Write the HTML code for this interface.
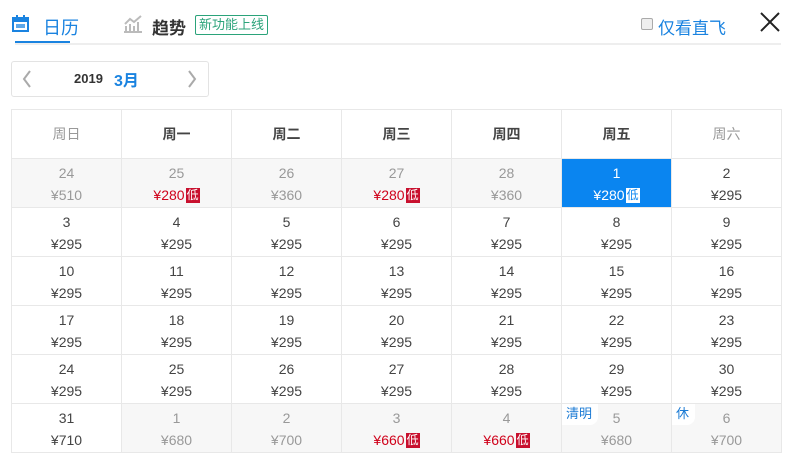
<!DOCTYPE html>
<html><head><meta charset="utf-8"><style>
body{margin:0;width:800px;height:453px;background:#fff;font-family:"Liberation Sans","Noto Sans CJK SC",sans-serif;position:relative;overflow:hidden;color:#333}
.a{position:absolute}
.grid{position:absolute;left:11px;top:109px;width:770px;height:343px;padding:1px 0 0 1px;background:#e8e8e8;display:grid;grid-template-columns:repeat(7,109px);grid-auto-rows:48px;gap:1px}
.grid>div{background:#fff;text-align:center;font-size:14px;color:#444;position:relative}
.th{font-size:15px;font-weight:bold;color:#333;line-height:48px}
.grid>div.w{color:#999;font-weight:normal}
.n{display:block;margin-top:6px;line-height:16px}
.p{display:block;margin-top:6px;line-height:16px}
.grid>div.g{background:#f7f7f7;color:#999}
.grid>div.s{background:#0a85f0;color:#fff}
.r{color:#d0021b}
.d{display:inline-block;background:#c8102e;color:#fff;font-size:12px;line-height:15px;padding:0 1px;margin-left:1px;vertical-align:1px}
.s .d{background:#fff;color:#0a85f0}
.h{position:absolute;left:0;top:0;background:#fff;color:#1a7ad4;font-size:13px;padding:1px 6px 2px 4px;border-radius:0 0 8px 0;line-height:18px}
</style></head><body>
<svg class="a" style="left:12px;top:15px" width="17" height="17" viewBox="0 0 17 17"><rect x="1" y="3" width="15" height="13" fill="none" stroke="#1a83e0" stroke-width="2"/><rect x="1" y="3" width="15" height="4" fill="#1a83e0"/><rect x="4" y="0" width="2" height="4" fill="#1a83e0"/><rect x="11" y="0" width="2" height="4" fill="#1a83e0"/><rect x="4" y="9" width="9" height="4" fill="#1a83e0" opacity=".7"/></svg>
<div class="a" style="left:43px;top:14px;font-size:18px;color:#1a83e0">日历</div>
<div class="a" style="left:15px;top:41px;width:55px;height:2px;background:#1a83e0"></div>
<div class="a" style="left:15px;top:43px;width:766px;height:2px;background:#eee"></div>
<svg class="a" style="left:123px;top:15px" width="20" height="18" viewBox="0 0 20 18"><path d="M1 17h18M3 16v-5M7 16v-7M11 16v-5M15 16v-9M2 9l5-5 4 3 7-6" fill="none" stroke="#bbb" stroke-width="2"/></svg>
<div class="a" style="left:152px;top:14px;font-size:17px;color:#333;font-weight:bold">趋势</div>
<div class="a" style="left:195px;top:15px;width:71px;height:18px;border:1px solid #2ba37a;border-radius:2px;color:#2ba37a;font-size:13px;line-height:18px;text-align:center">新功能上线</div>
<div class="a" style="left:641px;top:18px;width:10px;height:10px;border:1px solid #aaa;background:#eee;border-radius:2px"></div>
<div class="a" style="left:658px;top:14px;font-size:17px;color:#1a83e0">仅看直飞</div>
<svg class="a" style="left:760px;top:12px" width="20" height="20" viewBox="0 0 20 20"><path d="M1 1L19 19M19 1L1 19" stroke="#222" stroke-width="2"/></svg>
<div class="a" style="left:11px;top:61px;width:196px;height:34px;border:1px solid #e3e3e3;border-radius:3px"></div>
<svg class="a" style="left:22px;top:70px" width="10" height="18"><path d="M8 1L2 9l6 8" fill="none" stroke="#aaa" stroke-width="2"/></svg>
<svg class="a" style="left:187px;top:70px" width="10" height="18"><path d="M2 1l6 8-6 8" fill="none" stroke="#aaa" stroke-width="2"/></svg>
<div class="a" style="left:74px;top:71px;font-size:13px;font-weight:bold;color:#333">2019</div>
<div class="a" style="left:114px;top:67px;font-size:16px;font-weight:bold;color:#1a83e0">3月</div>
<div class="grid">
<div class="th w">周日</div><div class="th">周一</div><div class="th">周二</div><div class="th">周三</div><div class="th">周四</div><div class="th">周五</div><div class="th w">周六</div>
<div class="g"><span class="n">24</span><span class="p">¥510</span></div><div class="g"><span class="n">25</span><span class="p r">¥280<span class="d">低</span></span></div><div class="g"><span class="n">26</span><span class="p">¥360</span></div><div class="g"><span class="n">27</span><span class="p r">¥280<span class="d">低</span></span></div><div class="g"><span class="n">28</span><span class="p">¥360</span></div><div class="s"><span class="n">1</span><span class="p">¥280<span class="d">低</span></span></div><div><span class="n">2</span><span class="p">¥295</span></div>
<div><span class="n">3</span><span class="p">¥295</span></div><div><span class="n">4</span><span class="p">¥295</span></div><div><span class="n">5</span><span class="p">¥295</span></div><div><span class="n">6</span><span class="p">¥295</span></div><div><span class="n">7</span><span class="p">¥295</span></div><div><span class="n">8</span><span class="p">¥295</span></div><div><span class="n">9</span><span class="p">¥295</span></div>
<div><span class="n">10</span><span class="p">¥295</span></div><div><span class="n">11</span><span class="p">¥295</span></div><div><span class="n">12</span><span class="p">¥295</span></div><div><span class="n">13</span><span class="p">¥295</span></div><div><span class="n">14</span><span class="p">¥295</span></div><div><span class="n">15</span><span class="p">¥295</span></div><div><span class="n">16</span><span class="p">¥295</span></div>
<div><span class="n">17</span><span class="p">¥295</span></div><div><span class="n">18</span><span class="p">¥295</span></div><div><span class="n">19</span><span class="p">¥295</span></div><div><span class="n">20</span><span class="p">¥295</span></div><div><span class="n">21</span><span class="p">¥295</span></div><div><span class="n">22</span><span class="p">¥295</span></div><div><span class="n">23</span><span class="p">¥295</span></div>
<div><span class="n">24</span><span class="p">¥295</span></div><div><span class="n">25</span><span class="p">¥295</span></div><div><span class="n">26</span><span class="p">¥295</span></div><div><span class="n">27</span><span class="p">¥295</span></div><div><span class="n">28</span><span class="p">¥295</span></div><div><span class="n">29</span><span class="p">¥295</span></div><div><span class="n">30</span><span class="p">¥295</span></div>
<div><span class="n">31</span><span class="p">¥710</span></div><div class="g"><span class="n">1</span><span class="p">¥680</span></div><div class="g"><span class="n">2</span><span class="p">¥700</span></div><div class="g"><span class="n">3</span><span class="p r">¥660<span class="d">低</span></span></div><div class="g"><span class="n">4</span><span class="p r">¥660<span class="d">低</span></span></div><div class="g"><span class="h">清明</span><span class="n">5</span><span class="p">¥680</span></div><div class="g"><span class="h">休</span><span class="n">6</span><span class="p">¥700</span></div>
</div>
</body></html>
